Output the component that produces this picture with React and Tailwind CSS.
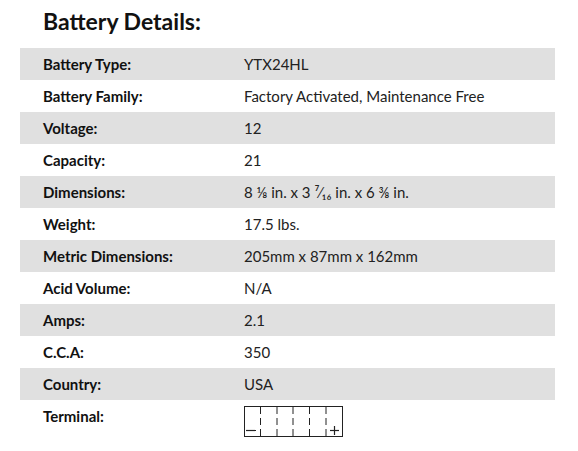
import React from "react"

const specs = [
  { label: "Battery Type:", value: "YTX24HL" },
  { label: "Battery Family:", value: "Factory Activated, Maintenance Free" },
  { label: "Voltage:", value: "12" },
  { label: "Capacity:", value: "21" },
  { label: "Dimensions:", value: "8 ⅛ in. x 3 ⁷⁄₁₆ in. x 6 ⅜ in." },
  { label: "Weight:", value: "17.5 lbs." },
  { label: "Metric Dimensions:", value: "205mm x 87mm x 162mm" },
  { label: "Acid Volume:", value: "N/A" },
  { label: "Amps:", value: "2.1" },
  { label: "C.C.A:", value: "350" },
  { label: "Country:", value: "USA" },
]

// terminal layout diagram: 6 cells, negative left, positive right
const TerminalDiagram = () => {
  const dividers = [16.5, 33, 49, 65.5, 82]
  return (
    <svg width="99" height="31" viewBox="0 0 99 31" className="block">
      <rect x="0.5" y="0.5" width="98" height="30" fill="white" stroke="#222" strokeWidth="1" />
      {dividers.map((x) => (
        <line key={x} x1={x} y1="1" x2={x} y2="30" stroke="#222" strokeWidth="1" strokeDasharray="7 4" />
      ))}
      <line x1="2" y1="24.5" x2="12" y2="24.5" stroke="#222" strokeWidth="1.2" />
      <line x1="86" y1="24.5" x2="95" y2="24.5" stroke="#222" strokeWidth="1.2" />
      <line x1="90.5" y1="20" x2="90.5" y2="29" stroke="#222" strokeWidth="1.2" />
    </svg>
  )
}

const App = () => {
  return (
    <div className="bg-white min-h-[451px] px-5 pt-[6px] font-['Lato','Open_Sans',sans-serif] text-[#222]">
      <h2 className="text-[23px] font-bold text-[#111] pl-[23px] leading-[30px] mb-3">Battery Details:</h2>

      <div className="w-[535px]">
        {specs.map((row, index) => (
          <div
            key={row.label}
            className={`flex items-center h-8 text-[15px] ${index % 2 === 0 ? "bg-[#e0e0e0]" : "bg-white"}`}
          >
            <div className="w-[201px] pl-[23px] font-bold text-[#111]">{row.label}</div>
            <div className="pl-[23px]">{row.value}</div>
          </div>
        ))}
        <div className="flex text-[15px] pt-[6px]">
          <div className="w-[201px] pl-[23px] font-bold text-[#111] leading-[20px]">Terminal:</div>
          <div className="pl-[23px]">
            <TerminalDiagram />
          </div>
        </div>
      </div>
    </div>
  )
}

export default App
